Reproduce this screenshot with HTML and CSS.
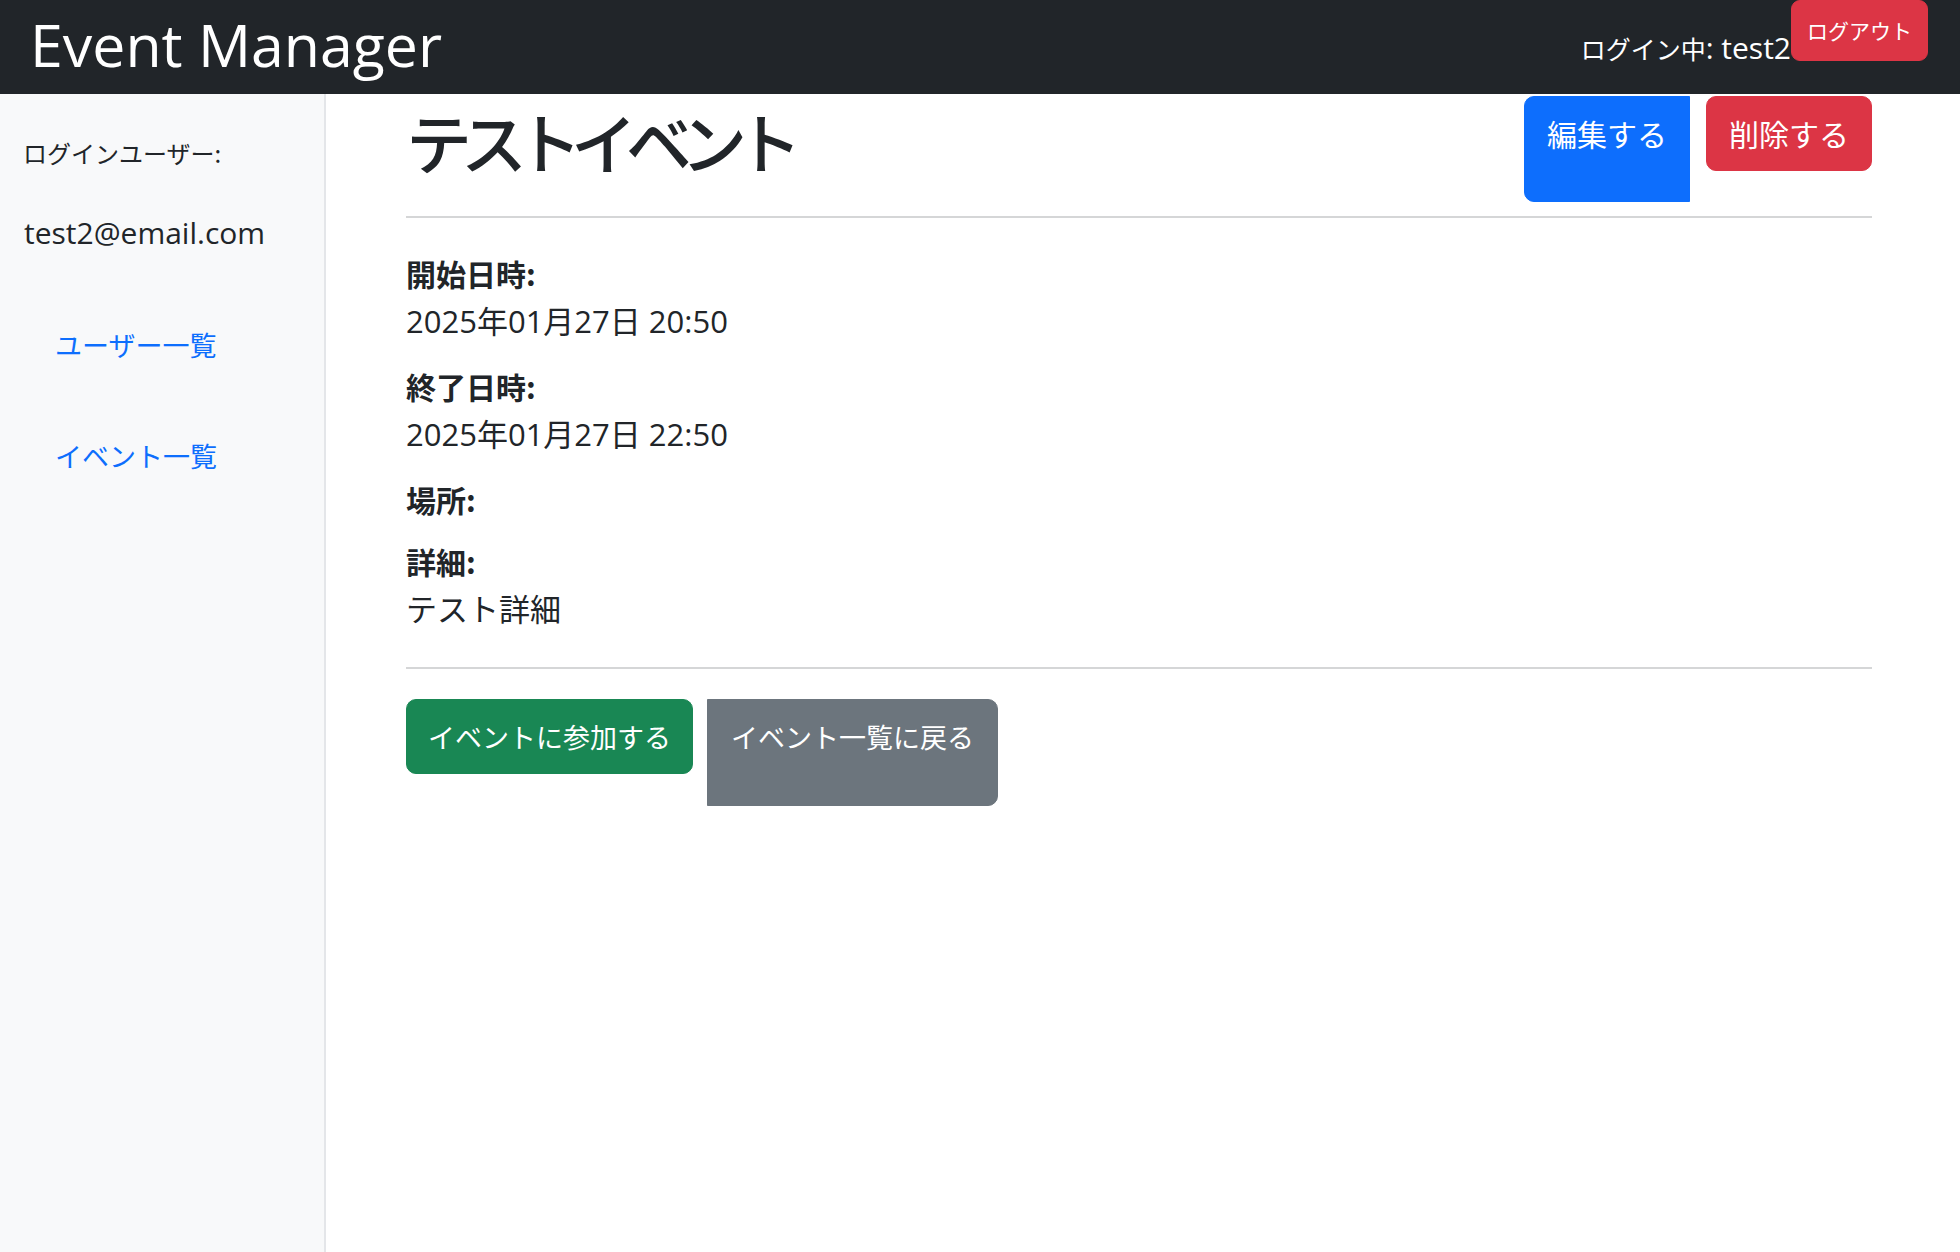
FILE: index.html
```html
<!DOCTYPE html>
<html lang="ja">
<head>
<meta charset="utf-8">
<title>Event Manager</title>
<link rel="stylesheet" href="styles.css">
</head>
<body>
<header class="navbar">
  <div class="brand">Event Manager</div>
  <div class="user-area">
    <span class="user-label">ログイン中<span class="latin">: test2</span></span>
    <form class="logout-form"><button type="button" class="btn btn-logout">ログアウト</button></form>
  </div>
</header>
<div class="layout">
  <aside class="sidebar">
    <p class="side-text">ログインユーザー:</p>
    <p class="side-text side-email">test2@email.com</p>
    <ul class="side-nav">
      <li><a class="side-link" href="#">ユーザー一覧</a></li>
      <li><a class="side-link" href="#">イベント一覧</a></li>
    </ul>
  </aside>
  <main class="main">
    <div class="header-row">
      <h1 class="title">テストイベント</h1>
      <div class="actions">
        <a class="btn btn-edit" href="#">編集する</a>
        <form class="delete-form"><button type="button" class="btn btn-delete">削除する</button></form>
      </div>
    </div>
    <hr class="divider divider-top">
    <div class="fields">
      <div class="field">
        <div class="field-label">開始日時:</div>
        <div class="field-value">2025年01月27日 20:50</div>
      </div>
      <div class="field">
        <div class="field-label">終了日時:</div>
        <div class="field-value">2025年01月27日 22:50</div>
      </div>
      <div class="field is-empty">
        <div class="field-label">場所:</div>
      </div>
      <div class="field">
        <div class="field-label">詳細:</div>
        <div class="field-value">テスト詳細</div>
      </div>
    </div>
    <hr class="divider divider-bottom">
    <div class="bottom-actions">
      <form class="join-form"><button type="button" class="btn btn-join">イベントに参加する</button></form>
      <a class="btn btn-back" href="#">イベント一覧に戻る</a>
    </div>
  </main>
</div>
</body>
</html>
```
FILE: styles.css
```css
* { box-sizing: border-box; }
html, body { margin: 0; padding: 0; }
body {
  font-family: "Noto Sans CJK JP", sans-serif;
  color: #212529;
  background: #fff;
  font-size: 24px;
}
form { margin: 0; }
p { margin: 0; }
ul { margin: 0; padding: 0; list-style: none; }

.navbar {
  height: 94px;
  background: #212529;
  display: flex;
  justify-content: space-between;
  align-items: stretch;
  padding: 0 32px 0 30px;
}
.brand {
  align-self: center;
  color: #fff;
  font-family: "Open Sans", "Noto Sans CJK JP", sans-serif;
  font-size: 59px;
  font-weight: 500;
  line-height: 1;
  padding-bottom: 6px;
}
.user-area {
  display: flex;
  align-items: flex-start;
}
.user-label {
  color: #fff;
  font-size: 25px;
  line-height: 36px;
  margin-top: 30px;
}
.latin {
  font-family: "Open Sans", sans-serif;
  font-size: 30px;
}
.btn {
  display: inline-block;
  border: 1px solid transparent;
  color: #fff;
  text-decoration: none;
  font-family: "Noto Sans CJK JP", sans-serif;
  cursor: pointer;
  white-space: nowrap;
}
.btn-logout {
  background: #dc3545;
  border-color: #dc3545;
  font-size: 21px;
  line-height: 31px;
  padding: 14px 15px;
  border-radius: 9px;
}

.layout {
  display: flex;
  min-height: calc(100vh - 94px);
}
.sidebar {
  width: 326px;
  flex: none;
  background: #f8f9fa;
  border-right: 2px solid #e4e6e9;
  padding: 41px 0 0 23px;
}
.side-text {
  font-size: 24px;
  line-height: 36px;
}
.side-email {
  margin-top: 44px;
  font-family: "Open Sans", "Noto Sans CJK JP", sans-serif;
  font-size: 30px;
  padding-left: 1px;
}
.side-nav {
  margin-top: 76px;
  padding-left: 32px;
  display: flex;
  flex-direction: column;
  gap: 75px;
}
.side-link {
  color: #0d6efd;
  text-decoration: none;
  font-size: 27px;
  line-height: 36px;
}

.main {
  flex: 1;
  padding: 0 88px 0 80px;
}
.header-row {
  margin-top: 2px;
  display: flex;
  justify-content: space-between;
  align-items: stretch;
}
.title {
  margin: 0;
  font-size: 66px;
  font-weight: 500;
  letter-spacing: -11px;
  line-height: 72px;
  padding: 8px 0 26px;
}
.actions {
  display: flex;
  align-items: stretch;
  gap: 16px;
}
.btn-edit, .btn-delete {
  font-size: 30px;
  line-height: 45px;
  padding: 14px 22px;
}
.btn-edit {
  background: #0d6efd;
  border-color: #0d6efd;
  border-radius: 10px 0 0 10px;
}
.btn-delete {
  background: #dc3545;
  border-color: #dc3545;
  border-radius: 10px;
}

.divider {
  border: 0;
  border-top: 2px solid #d5d6d7;
  margin: 0;
}
.divider-top { margin-top: 14px; margin-bottom: 37px; }
.divider-bottom { margin-top: 37px; margin-bottom: 30px; }

.field { margin-bottom: 26px; }
.field-label {
  font-size: 30px;
  font-weight: 700;
  line-height: 36px;
  margin-bottom: 9px;
}
.field.is-empty .field-label { margin-bottom: 3px; }
.field-value {
  font-family: "Open Sans", "Noto Sans CJK JP", sans-serif;
  font-size: 31px;
  line-height: 42px;
}

.bottom-actions {
  display: flex;
  align-items: stretch;
  gap: 14px;
}
.join-form { padding-bottom: 32px; }
.btn-join, .btn-back {
  font-size: 27px;
  line-height: 41px;
  padding: 16px 21px;
}
.btn-join {
  background: #198754;
  border-color: #198754;
  border-radius: 10px;
}
.btn-back {
  background: #6c757d;
  border-color: #6c757d;
  border-radius: 0 10px 10px 0;
  padding-left: 23px;
  padding-right: 23px;
}
```
